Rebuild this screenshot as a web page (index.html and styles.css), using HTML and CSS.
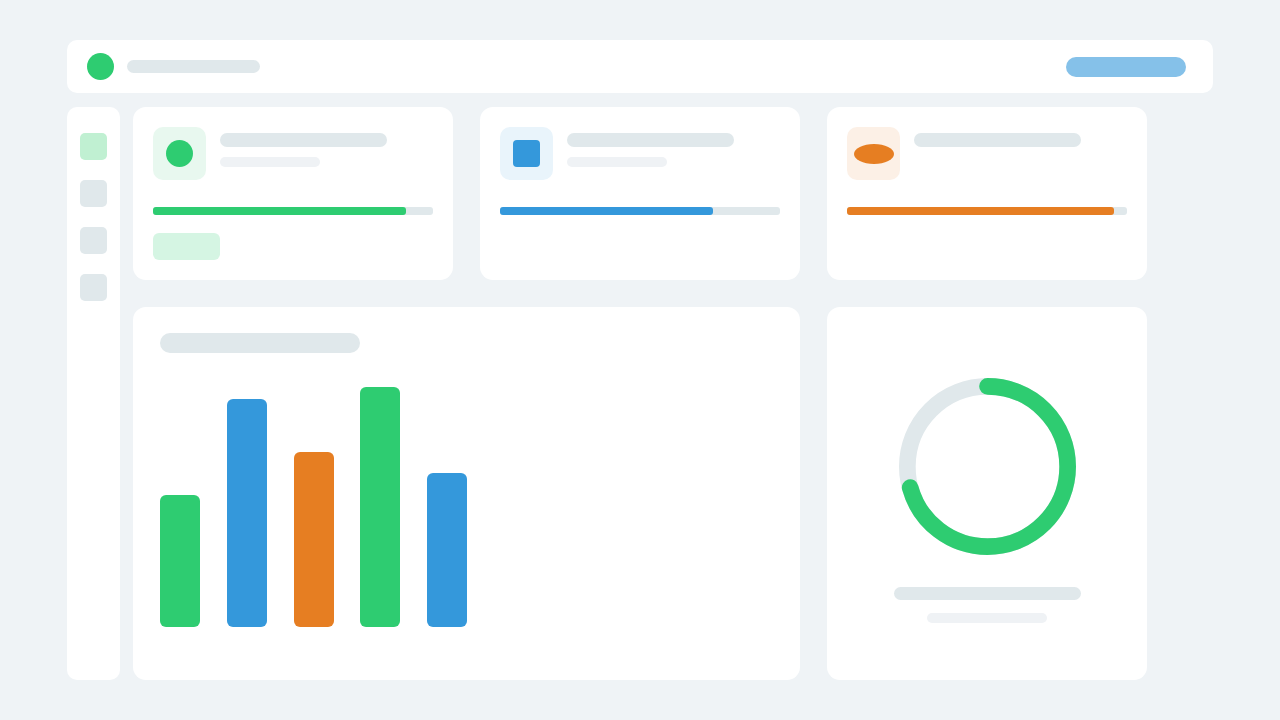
FILE: index.html
```html
<!DOCTYPE html>
<html lang="en">
<head>
  <meta charset="UTF-8">
  <meta name="viewport" content="width=device-width, initial-scale=1.0">
  <title>Dashboard</title>
  <link rel="stylesheet" href="styles.css">
</head>
<body>
  <header class="topbar">
    <div class="logo"></div>
    <div class="line brand"></div>
    <button class="action" type="button" aria-label="Action"></button>
  </header>

  <div class="layout">
    <nav class="sidebar">
      <a href="#" class="nav-item active" aria-label="Overview"></a>
      <a href="#" class="nav-item" aria-label="Reports"></a>
      <a href="#" class="nav-item" aria-label="Activity"></a>
      <a href="#" class="nav-item" aria-label="Settings"></a>
    </nav>

    <main class="content">
      <section class="card stat green">
        <div class="stat-head">
          <div class="tile"><div class="shape circle"></div></div>
          <div class="lines">
            <div class="line title"></div>
            <div class="line subtitle"></div>
          </div>
        </div>
        <div class="track"><div class="fill" style="width: 90.5%"></div></div>
        <div class="tag"></div>
      </section>

      <section class="card stat blue">
        <div class="stat-head">
          <div class="tile"><div class="shape square"></div></div>
          <div class="lines">
            <div class="line title"></div>
            <div class="line subtitle"></div>
          </div>
        </div>
        <div class="track"><div class="fill" style="width: 76.2%"></div></div>
      </section>

      <section class="card stat orange">
        <div class="stat-head">
          <div class="tile"><div class="shape ellipse"></div></div>
          <div class="lines">
            <div class="line title"></div>
          </div>
        </div>
        <div class="track"><div class="fill" style="width: 95.2%"></div></div>
      </section>

      <section class="card chart">
        <div class="line heading"></div>
        <div class="bars">
          <div class="bar green" style="height: 55%"></div>
          <div class="bar blue" style="height: 95%"></div>
          <div class="bar orange" style="height: 73%"></div>
          <div class="bar green" style="height: 100%"></div>
          <div class="bar blue" style="height: 64%"></div>
        </div>
      </section>

      <section class="card goal">
        <svg class="ring" viewBox="0 0 265 265" aria-hidden="true">
          <circle class="ring-track" cx="132.5" cy="132.5" r="120"/>
          <circle class="ring-value" cx="132.5" cy="132.5" r="120" stroke-dasharray="532.5 754" transform="rotate(-90 132.5 132.5)"/>
        </svg>
        <div class="line caption"></div>
        <div class="line note"></div>
      </section>
    </main>
  </div>
</body>
</html>
```
FILE: styles.css
```css
* {
  margin: 0;
  padding: 0;
  box-sizing: border-box;
}

body {
  display: flex;
  flex-direction: column;
  gap: 14px;
  min-height: 100vh;
  padding: 40px 67px;
  background: #eff3f6;
  font-family: "Open Sans", sans-serif;
}

.green {
  --main: #2ecc71;
  --soft: #e8f8ef;
}

.blue {
  --main: #3498db;
  --soft: #e9f4fb;
}

.orange {
  --main: #e67e22;
  --soft: #fcf0e6;
}

/* placeholder lines */
.line {
  height: 14px;
  border-radius: 7px;
  background: #e0e8eb;
}

/* top bar */
.topbar {
  display: flex;
  align-items: center;
  height: 53px;
  padding: 0 27px 0 20px;
  border-radius: 10px;
  background: #fff;
}

.logo {
  width: 27px;
  height: 27px;
  border-radius: 50%;
  background: #2ecc71;
}

.brand {
  width: 133px;
  height: 13px;
  margin-left: 13px;
}

.action {
  width: 120px;
  height: 20px;
  margin-left: auto;
  border: none;
  border-radius: 10px;
  background: #85c1e9;
  cursor: pointer;
}

/* sidebar */
.layout {
  display: flex;
  flex: 1;
  gap: 13px;
}

.sidebar {
  display: flex;
  flex-direction: column;
  gap: 20px;
  flex-shrink: 0;
  width: 53px;
  padding: 26px 13px;
  border-radius: 10px;
  background: #fff;
}

.nav-item {
  height: 27px;
  border-radius: 5px;
  background: #e0e8eb;
}

.nav-item.active {
  background: #c0f0d2;
}

/* cards */
.content {
  display: grid;
  grid-template-columns: repeat(3, 1fr);
  grid-template-rows: auto 1fr;
  gap: 27px;
  flex: 1;
  padding-right: 66px;
}

.card {
  border-radius: 13px;
  background: #fff;
}

.stat {
  padding: 20px;
}

.stat-head {
  display: flex;
  gap: 14px;
}

.tile {
  display: flex;
  align-items: center;
  justify-content: center;
  flex-shrink: 0;
  width: 53px;
  height: 53px;
  border-radius: 10px;
  background: var(--soft);
}

.shape {
  width: 27px;
  height: 27px;
  background: var(--main);
}

.circle {
  border-radius: 50%;
}

.square {
  border-radius: 4px;
}

.ellipse {
  width: 40px;
  height: 20px;
  border-radius: 50%;
}

.lines {
  flex: 1;
  padding-top: 6px;
}

.title {
  max-width: 167px;
}

.subtitle {
  max-width: 100px;
  height: 10px;
  margin-top: 10px;
  border-radius: 5px;
  background: #eff2f5;
}

.track {
  height: 8px;
  margin-top: 27px;
  border-radius: 3px;
  background: #e0e8eb;
}

.fill {
  height: 100%;
  border-radius: 3px;
  background: var(--main);
}

.tag {
  width: 67px;
  height: 27px;
  margin-top: 18px;
  border-radius: 6px;
  background: #d5f5e3;
}

/* bar chart */
.chart {
  display: flex;
  flex-direction: column;
  grid-column: span 2;
  padding: 26px 27px 53px;
}

.heading {
  width: 200px;
  height: 20px;
  border-radius: 10px;
}

.bars {
  display: flex;
  align-items: flex-end;
  justify-content: space-between;
  flex: 1;
  width: 307px;
  min-height: 240px;
  margin-top: 34px;
}

.bar {
  width: 40px;
  border-radius: 6px;
  background: var(--main);
}

/* goal ring */
.goal {
  display: flex;
  flex-direction: column;
  align-items: center;
  padding: 71px 20px 20px;
}

.ring {
  width: 177px;
  height: 177px;
}

.ring circle {
  fill: none;
  stroke-width: 25;
}

.ring-track {
  stroke: #e0e8eb;
}

.ring-value {
  stroke: #2ecc71;
  stroke-linecap: round;
}

.caption {
  width: 187px;
  height: 13px;
  margin-top: 32px;
}

.note {
  width: 120px;
  height: 10px;
  margin-top: 13px;
  border-radius: 5px;
  background: #eff2f5;
}

@media screen and (max-width: 900px) {
  body {
    padding: 20px;
  }

  .content {
    grid-template-columns: 1fr;
    padding-right: 0;
  }

  .chart {
    grid-column: auto;
  }

  .bars {
    width: 100%;
    max-width: 307px;
  }
}
```
